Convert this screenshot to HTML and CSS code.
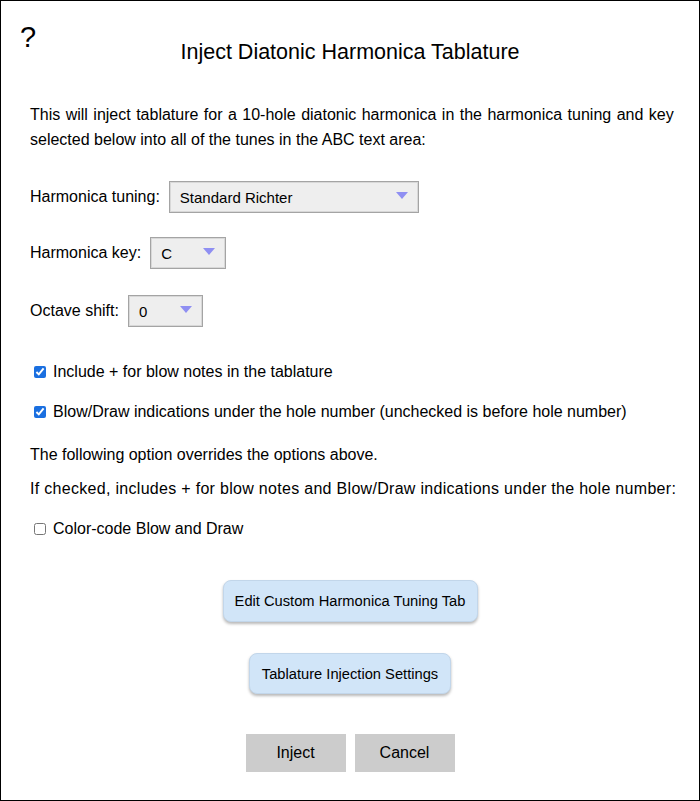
FILE: index.html
```html
<!DOCTYPE html>
<html>
<head>
<meta charset="utf-8">
<link rel="stylesheet" href="styles.css">
</head>
<body>
<div class="dialog">
  <div class="help">?</div>
  <h1 class="title">Inject Diatonic Harmonica Tablature</h1>
  <p class="intro"><span class="intro-wide">This will inject tablature for a 10-hole diatonic harmonica in the harmonica tuning and key</span> selected below into all of the tunes in the ABC text area:</p>

  <div class="field field-tuning">
    <span class="label">Harmonica tuning:</span>
    <div class="select select-tuning"><span>Standard Richter</span><svg class="arrow" width="12" height="7" viewBox="0 0 12 7"><polygon points="0,0 12,0 6,7" fill="#8f8ff2"/></svg></div>
  </div>
  <div class="field field-key">
    <span class="label">Harmonica key:</span>
    <div class="select select-key"><span>C</span><svg class="arrow" width="12" height="7" viewBox="0 0 12 7"><polygon points="0,0 12,0 6,7" fill="#8f8ff2"/></svg></div>
  </div>
  <div class="field field-octave">
    <span class="label">Octave shift:</span>
    <div class="select select-octave"><span>0</span><svg class="arrow" width="12" height="7" viewBox="0 0 12 7"><polygon points="0,0 12,0 6,7" fill="#8f8ff2"/></svg></div>
  </div>

  <label class="check check-1"><input type="checkbox" checked><span>Include + for blow notes in the tablature</span></label>
  <label class="check check-2"><input type="checkbox" checked><span>Blow/Draw indications under the hole number (unchecked is before hole number)</span></label>

  <div class="note note-1">The following option overrides the options above.</div>
  <div class="note note-2">If checked, includes + for blow notes and Blow/Draw indications under the hole number:</div>

  <label class="check check-3"><input type="checkbox"><span>Color-code Blow and Draw</span></label>

  <div class="center-row row-b1"><button class="btn-blue btn-custom">Edit Custom Harmonica Tuning Tab</button></div>
  <div class="center-row row-b2"><button class="btn-blue btn-settings">Tablature Injection Settings</button></div>
  <div class="center-row row-actions">
    <button class="btn-gray">Inject</button>
    <button class="btn-gray">Cancel</button>
  </div>
</div>
</body>
</html>
```

FILE: styles.css
```css
html, body {
  margin: 0;
  padding: 0;
  background: #fff;
}
body {
  font-family: "Liberation Sans", Arial, sans-serif;
  color: #000;
  font-size: 16px;
}
.dialog {
  position: relative;
  box-sizing: border-box;
  width: 700px;
  height: 801px;
  border: 1px solid #000;
  padding: 0 12px 0 29px;
  display: flex;
  flex-direction: column;
}
.help {
  position: absolute;
  left: 19px;
  top: 20px;
  font-size: 29px;
  line-height: 32px;
}
.title {
  margin: 39px 0 0 -29px;
  width: 698px;
  text-align: center;
  font-size: 21.5px;
  font-weight: normal;
  line-height: 24px;
}
.intro {
  margin: 38px 0 0 0;
  line-height: 25px;
  font-size: 16px;
}
.intro-wide {
  word-spacing: 1px;
}
.field {
  display: flex;
  align-items: center;
  height: 32px;
}
.field-tuning { margin-top: 29px; }
.field-key { margin-top: 24px; }
.field-octave { margin-top: 26px; }
.label {
  margin-right: 9px;
}
.select {
  box-sizing: border-box;
  height: 32px;
  background: #eeeeee;
  border: 1px solid #a4a4a4;
  box-shadow: inset 0 0 0 1px #d8d8d8;
  display: flex;
  align-items: center;
  padding-left: 10px;
  font-size: 15px;
  position: relative;
}
.select .arrow {
  position: absolute;
  right: 10px;
  top: 10px;
}
.select-tuning { width: 250px; }
.select-key { width: 76px; }
.select-octave { width: 75px; }
.check {
  display: flex;
  align-items: center;
  height: 20px;
}
.check input {
  margin: 0 7px 0 4px;
  width: 12px;
  height: 12px;
  accent-color: #1a6fe0;
}
.check-1 { margin-top: 35px; }
.check-2 { margin-top: 20px; }
.check-3 { margin-top: 20px; }
.note {
  height: 20px;
  line-height: 20px;
  white-space: nowrap;
}
.note-1 { margin-top: 23px; }
.note-2 { margin-top: 14px; letter-spacing: 0.3px; }
.center-row {
  display: flex;
  justify-content: center;
  gap: 9px;
  margin-left: -29px;
  width: 698px;
}
.row-b1 { margin-top: 41px; }
.row-b2 { margin-top: 31px; }
.row-actions { margin-top: 40px; }
button {
  font-family: "Liberation Sans", Arial, sans-serif;
  font-size: 16px;
  color: #000;
  cursor: pointer;
  white-space: nowrap;
}
.btn-blue {
  background: #d1e5f8;
  border: 1px solid #c2d6ea;
  border-radius: 8px;
  box-shadow: 0 2px 3px rgba(0, 0, 0, 0.28);
  padding: 0;
  font-size: 14.7px;
}
.btn-custom { width: 255px; height: 42px; }
.btn-settings { width: 202px; height: 41px; }
.btn-gray {
  background: #cccccc;
  border: none;
  width: 100px;
  height: 38px;
  padding: 0;
}
```
